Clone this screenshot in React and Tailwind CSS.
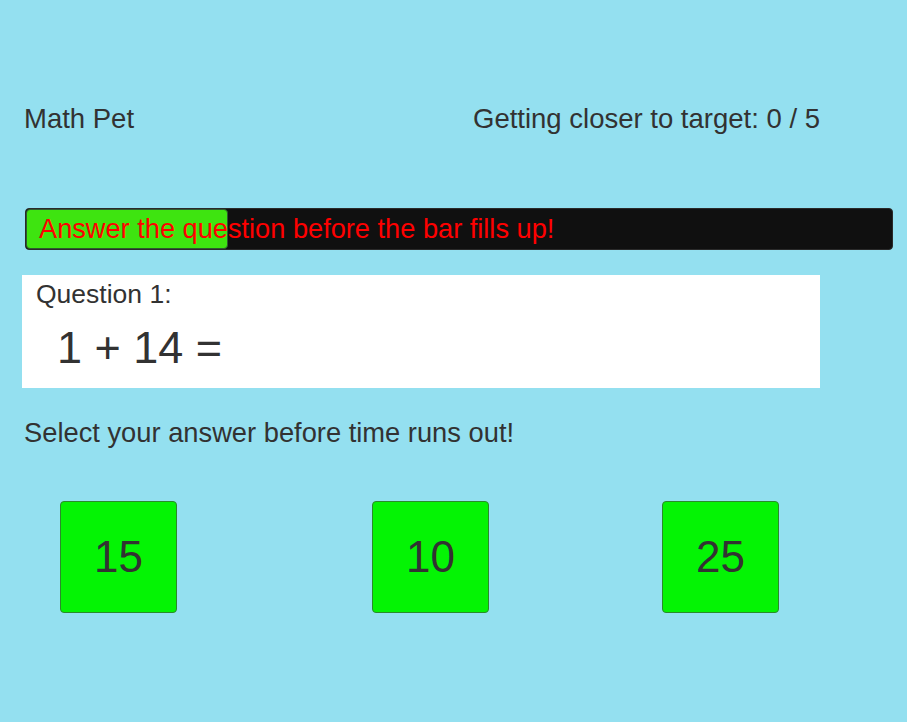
import React from "react";

const answers = [
  { value: 15, ml: "ml-[60px]" },
  { value: 10, ml: "ml-[195px]" },
  { value: 25, ml: "ml-[173px]" },
];

export default function App() {
  const progress = 202; // px filled

  return (
    <div
      className="w-[907px] h-[722px] bg-[#94e0f0] text-[#323232] overflow-hidden"
      style={{ fontFamily: '"Liberation Sans", Arial, sans-serif' }}>
      {/* Header */}
      <div className="flex pt-[104px] text-[27.5px] leading-[30px]">
        <div className="ml-[24px] w-[449px]">Math Pet</div>
        <div>Getting closer to target: 0 / 5</div>
      </div>

      {/* Timer bar */}
      <div className="relative mt-[74px] ml-[25px] w-[868px] h-[42px] rounded-[4px] bg-[#101010] border border-[#2a2a2a] overflow-hidden">
        <div
          className="h-full bg-[#3ee410] rounded-[4px] border border-[#2d5a2d]"
          style={{ width: progress }}
        />
        <div className="absolute inset-0 flex items-center pl-[13px] pb-[1px] text-[27.2px] text-[#ff0000] leading-none">
          Answer the question before the bar fills up!
        </div>
      </div>

      {/* Question panel */}
      <div className="mt-[25px] ml-[22px] w-[798px] h-[113px] bg-white pt-[4px]">
        <div className="pl-[14px] text-[26.5px] leading-[30px]">Question 1:</div>
        <div className="pl-[35px] mt-[14px] text-[45px] leading-[50px]">1 + 14 =</div>
      </div>

      {/* Prompt */}
      <div className="mt-[30px] ml-[24px] text-[27.3px] leading-[30px]">
        Select your answer before time runs out!
      </div>

      {/* Answers */}
      <div className="flex mt-[53px]">
        {answers.map((a) => (
          <button
            key={a.value}
            className={`${a.ml} w-[117px] h-[112px] bg-[#04f404] border border-[#2b8a2b] rounded-[4px] flex items-center justify-center text-[44px] text-[#323232]`}>
            {a.value}
          </button>
        ))}
      </div>
    </div>
  );
}
